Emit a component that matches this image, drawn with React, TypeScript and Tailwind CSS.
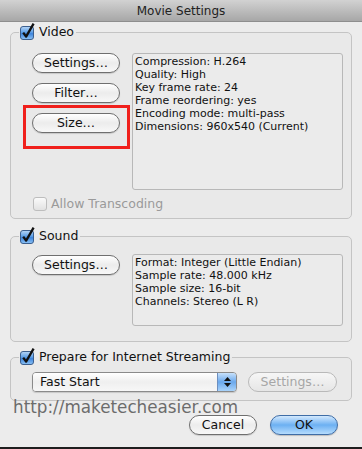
import type { ReactNode } from "react"

function CheckBox({ checked, disabled }: { checked?: boolean; disabled?: boolean }) {
  if (!checked) {
    return (
      <span
        className={`block h-[14px] w-[14px] rounded-[3px] border bg-linear-to-b from-[#fafafa] to-[#e2e2e2] ${
          disabled ? "border-[#bdbdbd]" : "border-[#7a7a7a]"
        }`}
      />
    )
  }
  return (
    <svg width="15" height="15" viewBox="0 0 15 15" className="block overflow-visible">
      <defs>
        <linearGradient id="aquaCheck" x1="0" y1="0" x2="0" y2="1">
          <stop offset="0" stopColor="#b9d8f8" />
          <stop offset="0.45" stopColor="#5c9ee6" />
          <stop offset="0.55" stopColor="#3d84dc" />
          <stop offset="1" stopColor="#8ec4f6" />
        </linearGradient>
      </defs>
      <rect x="0.5" y="1.5" width="13" height="13" rx="2.5" fill="url(#aquaCheck)" stroke="#3c5f8e" />
      <path d="M3.2 7.6 L6.1 11.6 L13.6 -1.4" fill="none" stroke="#111" strokeWidth="2.3" strokeLinejoin="round" />
    </svg>
  )
}

function Group({ label, className, children }: { label: string; className?: string; children: ReactNode }) {
  return (
    <fieldset className={`mx-[10px] rounded-[5px] border border-[#c4c4c4] bg-[#e9e9e9] ${className ?? ""}`}>
      <legend className="ml-[8px] pr-[2px] pl-[1px]">
        <span className="flex h-[15px] items-center gap-[4px] text-[12.5px] text-[#111]">
          <CheckBox checked />
          <span>{label}</span>
        </span>
      </legend>
      {children}
    </fieldset>
  )
}

function AquaButton({ children, className, disabled }: { children: ReactNode; className?: string; disabled?: boolean }) {
  return (
    <button
      className={`flex h-[20px] items-center justify-center rounded-full border text-[12.5px] leading-none ${
        disabled
          ? "border-[#b9b9b9] bg-linear-to-b from-[#f6f6f6] to-[#e6e6e6] text-[#a6a6a6]"
          : "border-[#6f6f6f] bg-linear-to-b from-[#ffffff] via-[#ececec] to-[#f8f8f8] text-[#111] shadow-[0_1px_1px_rgba(0,0,0,0.15)]"
      } ${className ?? ""}`}
    >
      {children}
    </button>
  )
}

function InfoBox({ lines, className }: { lines: string[]; className?: string }) {
  return (
    <div className={`rounded-[3px] border border-[#b8b8b8] bg-[#ebebeb] pt-[1px] pl-[2px] text-[11px] leading-[13px] text-[#111] ${className ?? ""}`}>
      {lines.map((l) => (
        <div key={l}>{l}</div>
      ))}
    </div>
  )
}

export default function App() {
  return (
    <div className="relative flex h-[449px] w-[362px] flex-col overflow-hidden bg-[#ececec] font-['DejaVu_Sans',sans-serif]">
      {/* Title bar */}
      <div className="flex h-[22px] items-center justify-center border-b border-[#8e8e8e] bg-linear-to-b from-[#d2d2d2] to-[#a7a7a7] text-[12px] text-[#222]">
        Movie Settings
      </div>

      {/* Video */}
      <Group label="Video" className="mt-[3px]">
        <div className="flex flex-col pt-[13px] pr-[7px] pb-[7px] pl-[21px]">
          <div className="flex">
            <div className="relative flex w-[88px] flex-col gap-[10px]">
              <AquaButton>Settings…</AquaButton>
              <AquaButton>Filter…</AquaButton>
              <AquaButton>Size…</AquaButton>
              <div className="absolute top-[52px] -left-[9px] h-[44px] w-[107px] border-[3px] border-[#f0201c]" />
            </div>
            <InfoBox
              className="ml-[12px] h-[137px] w-[211px]"
              lines={[
                "Compression: H.264",
                "Quality: High",
                "Key frame rate: 24",
                "Frame reordering: yes",
                "Encoding mode: multi-pass",
                "Dimensions: 960x540 (Current)",
              ]}
            />
          </div>
          <div className="mt-[7px] ml-[1px] flex h-[14px] items-center gap-[4px] text-[12.5px] text-[#9a9a9a]">
            <CheckBox disabled />
            <span>Allow Transcoding</span>
          </div>
        </div>
      </Group>

      {/* Sound */}
      <Group label="Sound" className="mt-[10px]">
        <div className="flex pt-[10px] pr-[7px] pb-[15px] pl-[21px]">
          <AquaButton className="mt-[1px] w-[88px]">Settings…</AquaButton>
          <InfoBox
            className="ml-[12px] h-[72px] w-[211px]"
            lines={["Format: Integer (Little Endian)", "Sample rate: 48.000 kHz", "Sample size: 16-bit", "Channels: Stereo (L R)"]}
          />
        </div>
      </Group>

      {/* Streaming */}
      <Group label="Prepare for Internet Streaming" className="mt-[8px]">
        <div className="flex pt-[7px] pb-[8px] pl-[21px]">
          <div className="flex h-[20px] w-[205px] overflow-hidden rounded-[4px] border border-[#8a8a8a] shadow-[0_1px_1px_rgba(0,0,0,0.15)]">
            <div className="flex flex-1 items-center bg-linear-to-b from-[#ffffff] via-[#efefef] to-[#f7f7f7] pl-[7px] text-[12.5px] text-[#111]">
              Fast Start
            </div>
            <div className="flex w-[19px] flex-col items-center justify-center gap-[2px] border-l border-[#6d8fbf] bg-linear-to-b from-[#c7e1fb] via-[#6aa8ec] to-[#a9d3fa]">
              <svg width="7" height="4" viewBox="0 0 7 4">
                <path d="M3.5 0 L7 4 L0 4 Z" fill="#111" />
              </svg>
              <svg width="7" height="4" viewBox="0 0 7 4">
                <path d="M0 0 L7 0 L3.5 4 Z" fill="#111" />
              </svg>
            </div>
          </div>
          <AquaButton disabled className="ml-[11px] w-[89px]">
            Settings…
          </AquaButton>
        </div>
      </Group>

      {/* Footer buttons */}
      <div className="mt-[14px] flex justify-end gap-[13px] pr-[24px]">
        <AquaButton className="w-[68px]">Cancel</AquaButton>
        <button className="flex h-[20px] w-[68px] items-center justify-center rounded-full border border-[#3f6da6] bg-linear-to-b from-[#d3e9fd] via-[#6cb0f2] to-[#b5dcfd] text-[12.5px] leading-none text-[#111] shadow-[0_1px_1px_rgba(0,0,0,0.2)]">
          OK
        </button>
      </div>

      <div className="flex-1" />
      <div className="h-[2px] bg-[#1e1e1e]" />

      {/* Watermark */}
      <div className="absolute top-[397px] left-[13px] text-[16.8px] leading-[20px] text-[#6c6c6c]">
        http://maketecheasier.com
      </div>
    </div>
  )
}
